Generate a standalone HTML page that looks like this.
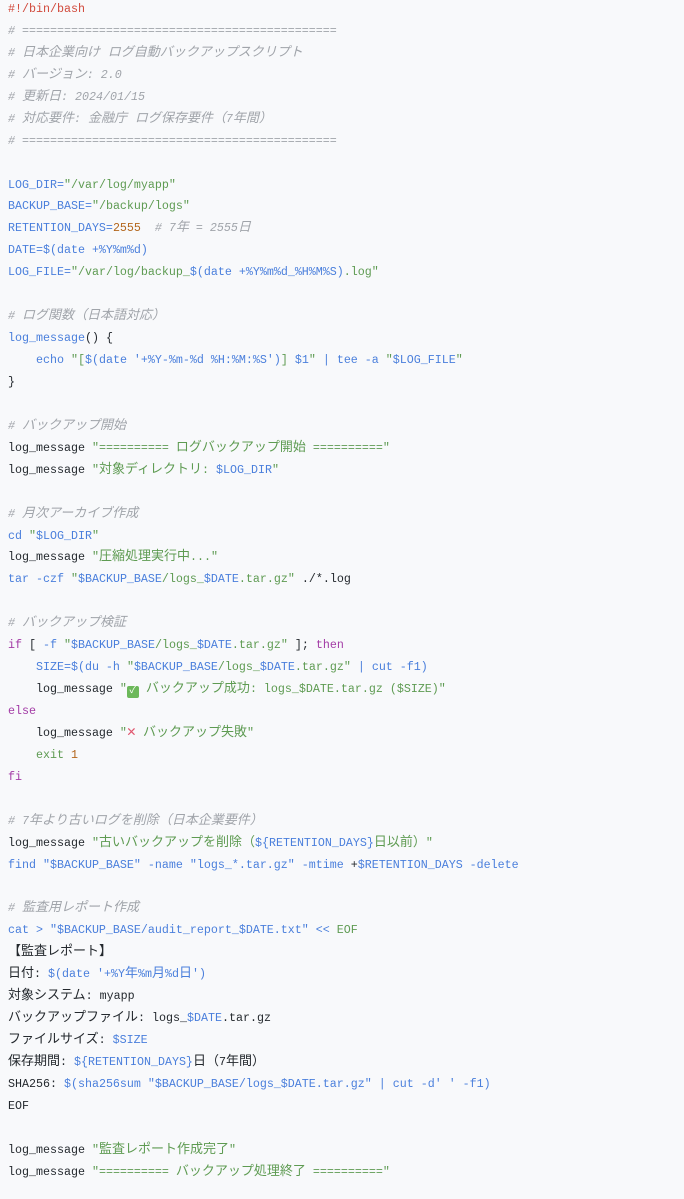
<!DOCTYPE html>
<html><head><meta charset="utf-8"><style>
html,body{margin:0;padding:0;background:#f8f9fb;width:684px;height:1199px;overflow:hidden}
pre{margin:0;padding:0 0 0 8px;position:relative;top:-1px;font-family:"Liberation Mono","Noto Sans CJK JP",monospace;font-size:11.67px;line-height:21.93px;color:#24292e;white-space:pre}
i{font-style:inherit;font-size:13px;line-height:10px}
.c{color:#a0a4aa;font-style:italic}
.r{color:#d14a3c}
.b{color:#4a7fdc}
.g{color:#5e9b52}
.k{color:#a33ca6}
.n{color:#b3661c}
</style></head><body><pre><span class="r">#!/bin/bash</span>
<span class="c"># =============================================</span>
<span class="c"># <i>日本企業向け ログ自動バックアップスクリプト</i></span>
<span class="c"># <i>バージョン</i>: 2.0</span>
<span class="c"># <i>更新日</i>: 2024/01/15</span>
<span class="c"># <i>対応要件</i>: <i>金融庁 ログ保存要件（</i>7<i>年間）</i></span>
<span class="c"># =============================================</span>

<span class="b">LOG_DIR=</span><span class="g">"/var/log/myapp"</span>
<span class="b">BACKUP_BASE=</span><span class="g">"/backup/logs"</span>
<span class="b">RETENTION_DAYS=</span><span class="n">2555</span>  <span class="c"># 7<i>年</i> = 2555<i>日</i></span>
<span class="b">DATE=$(date +%Y%m%d)</span>
<span class="b">LOG_FILE=</span><span class="g">"/var/log/backup_</span><span class="b">$(date +%Y%m%d_%H%M%S)</span><span class="g">.log"</span>

<span class="c"># <i>ログ関数（日本語対応）</i></span>
<span class="b">log_message</span>() {
    <span class="b">echo</span> <span class="g">"[</span><span class="b">$(date '+%Y-%m-%d %H:%M:%S')</span><span class="g">] </span><span class="b">$1</span><span class="g">"</span> <span class="b">| tee -a</span> <span class="g">"</span><span class="b">$LOG_FILE</span><span class="g">"</span>
}

<span class="c"># <i>バックアップ開始</i></span>
log_message <span class="g">"========== <i>ログバックアップ開始</i> =========="</span>
log_message <span class="g">"<i>対象ディレクトリ</i>: </span><span class="b">$LOG_DIR</span><span class="g">"</span>

<span class="c"># <i>月次アーカイブ作成</i></span>
<span class="b">cd</span> <span class="g">"</span><span class="b">$LOG_DIR</span><span class="g">"</span>
log_message <span class="g">"<i>圧縮処理実行中</i>..."</span>
<span class="b">tar -czf</span> <span class="g">"</span><span class="b">$BACKUP_BASE</span><span class="g">/logs_</span><span class="b">$DATE</span><span class="g">.tar.gz"</span> ./*.log

<span class="c"># <i>バックアップ検証</i></span>
<span class="k">if</span> [ <span class="b">-f</span> <span class="g">"</span><span class="b">$BACKUP_BASE</span><span class="g">/logs_</span><span class="b">$DATE</span><span class="g">.tar.gz"</span> ]; <span class="k">then</span>
    <span class="b">SIZE=$(du -h</span> <span class="g">"</span><span class="b">$BACKUP_BASE</span><span class="g">/logs_</span><span class="b">$DATE</span><span class="g">.tar.gz"</span> <span class="b">| cut -f1)</span>
    log_message <span class="g">"<span style="display:inline-block;width:12px;height:12px;background:#6cb85a;border-radius:2px;color:#fff;font-size:10px;line-height:12px;text-align:center;vertical-align:-1px">✓</span> <i>バックアップ成功</i>: logs_$DATE.tar.gz ($SIZE)"</span>
<span class="k">else</span>
    log_message <span class="g">"<span style="color:#e0566e;font-weight:bold;font-size:15px;line-height:10px">✕</span> <i>バックアップ失敗</i>"</span>
    <span class="g">exit</span> <span class="n">1</span>
<span class="k">fi</span>

<span class="c"># 7<i>年より古いログを削除（日本企業要件）</i></span>
log_message <span class="g">"<i>古いバックアップを削除（</i></span><span class="b">${RETENTION_DAYS}</span><span class="g"><i>日以前）</i>"</span>
<span class="b">find "$BACKUP_BASE" -name "logs_*.tar.gz" -mtime</span> +<span class="b">$RETENTION_DAYS -delete</span>

<span class="c"># <i>監査用レポート作成</i></span>
<span class="b">cat &gt; "$BACKUP_BASE/audit_report_$DATE.txt" &lt;&lt;</span> <span class="g">EOF</span>
<i>【監査レポート】</i>
<i>日付</i>: <span class="b">$(date '+%Y<i>年</i>%m<i>月</i>%d<i>日</i>')</span>
<i>対象システム</i>: myapp
<i>バックアップファイル</i>: logs_<span class="b">$DATE</span>.tar.gz
<i>ファイルサイズ</i>: <span class="b">$SIZE</span>
<i>保存期間</i>: <span class="b">${RETENTION_DAYS}</span><i>日（</i>7<i>年間）</i>
SHA256: <span class="b">$(sha256sum "$BACKUP_BASE/logs_$DATE.tar.gz" | cut -d' ' -f1)</span>
EOF

log_message <span class="g">"<i>監査レポート作成完了</i>"</span>
log_message <span class="g">"========== <i>バックアップ処理終了</i> =========="</span>
</pre></body></html>
